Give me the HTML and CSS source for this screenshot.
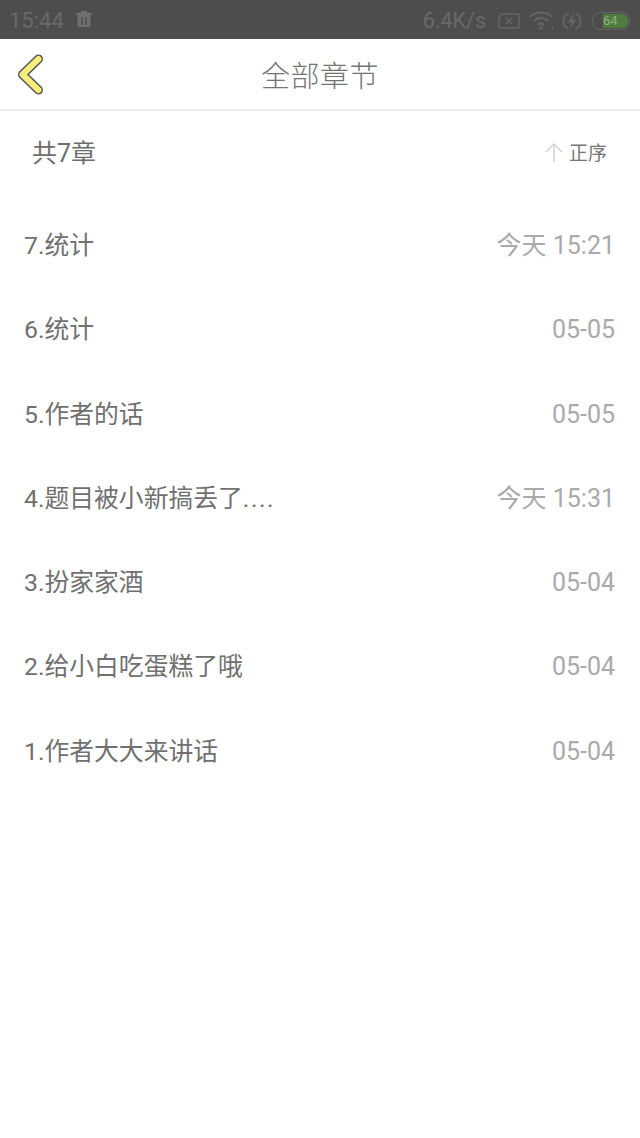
FILE: index.html
```html
<!DOCTYPE html>
<html lang="zh-CN">
<head>
    <meta charset="UTF-8">
    <title>全部章节</title>
    <link rel="stylesheet" href="styles.css">
</head>
<body>
    <div class="statusbar">
        <div class="status-left">
            <span class="clock">15:44</span>
            <svg class="trash" width="16" height="18" viewBox="0 0 16 18">
                <path d="M0 3h16v2H0zM5 1h6v2H5z" fill="#6f6f6f"/>
                <path d="M1.500 5h13v12h-13z" fill="#6f6f6f"/>
                <path d="M6 7v8M10 7v8" stroke="#4d4d4d" stroke-width="1.500"/>
            </svg>
        </div>
        <div class="status-right">
            <span class="speed">6.4K/s</span>
            <svg class="icon-sim" width="22" height="16" viewBox="0 0 22 16" fill="none" stroke="#656565" stroke-width="1.500">
                <path d="M4 1h17v14H1V4z"/>
                <path d="M8 5l6 6M14 5l-6 6"/>
            </svg>
            <svg class="icon-wifi" width="25" height="20" viewBox="0 0 25 20" fill="none" stroke="#656565" stroke-width="2.200">
                <path d="M1 6c6-6 16-6 22 0"/>
                <path d="M5 10c4-4 10-4 14 0"/>
                <path d="M9 14c2-2 4-2 6 0"/>
                <circle cx="12" cy="17" r="1.800" fill="#656565" stroke="none"/>
                <path d="M23.500 15v4" stroke-width="1"/>
            </svg>
            <svg class="icon-bolt" width="20" height="20" viewBox="0 0 20 20" fill="none">
                <path d="M6.500 2.200a8.500 8.500 0 0 0 0 15.600M13.500 2.200a8.500 8.500 0 0 1 0 15.600" stroke="#656565" stroke-width="1.800"/>
                <path d="M12.500 1L5.500 11.500h4L7.500 19l7-10.500h-4z" fill="#656565"/>
            </svg>
            <div class="battery"><div class="battery-fill">64</div></div>
        </div>
    </div>

    <div class="navbar">
        <svg class="back" width="30" height="42" viewBox="0 0 30 42">
            <path d="M23.500 6L7.500 21.500L23.500 37" fill="none" stroke="#555" stroke-width="9" stroke-linecap="round" stroke-linejoin="round"/>
            <path d="M23.500 6L7.500 21.500L23.500 37" fill="none" stroke="#f6ee7c" stroke-width="6" stroke-linecap="round" stroke-linejoin="round"/>
        </svg>
        <div class="title">全部章节</div>
    </div>

    <div class="summary">
        <span class="count">共7章</span>
        <div class="sort">
            <svg width="20" height="20" viewBox="0 0 20 20" fill="none" stroke="#d4d4d4" stroke-width="1.500">
                <path d="M10 20V2M2 10l8-8 8 8"/>
            </svg>
            <span>正序</span>
        </div>
    </div>

    <ul class="chapters">
        <li><span>7.统计</span><span class="date">今天 15:21</span></li>
        <li><span>6.统计</span><span class="date">05-05</span></li>
        <li><span>5.作者的话</span><span class="date">05-05</span></li>
        <li><span>4.题目被小新搞丢了<span class="dots">....</span></span><span class="date">今天 15:31</span></li>
        <li><span>3.扮家家酒</span><span class="date">05-04</span></li>
        <li><span>2.给小白吃蛋糕了哦</span><span class="date">05-04</span></li>
        <li><span>1.作者大大来讲话</span><span class="date">05-04</span></li>
    </ul>
</body>
</html>
```

FILE: styles.css
```css
html, body {
    margin: 0;
    padding: 0;
}

body {
    height: 1138px;
    overflow: hidden;
    background: #fff;
    font-family: Roboto, "Noto Sans CJK SC", sans-serif;
}

.statusbar {
    height: 39px;
    background: #4d4d4d;
    color: #696969;
    display: flex;
    justify-content: space-between;
    align-items: center;
    padding: 2px 10px 0 9px;
    box-sizing: border-box;
    font-size: 22px;
}

.status-left,
.status-right {
    display: flex;
    align-items: center;
}

.trash {
    margin-left: 12px;
    margin-bottom: 4px;
}

.speed {
    font-size: 21.5px;
}

.icon-sim {
    margin-left: 12px;
}

.icon-wifi {
    margin-left: 9px;
}

.icon-bolt {
    margin-left: 8px;
}

.battery {
    margin-left: 10px;
    width: 34px;
    height: 14px;
    border: 1.5px solid #656565;
    border-radius: 8px;
    display: flex;
    justify-content: flex-end;
    padding: 1px;
}

.battery-fill {
    width: 25px;
    background: #4f7d3f;
    border-radius: 0 6px 6px 0;
    color: #8fb184;
    font-size: 13px;
    line-height: 14px;
}

.navbar {
    height: 70px;
    border-bottom: 2px solid #ececec;
    display: flex;
    align-items: center;
    justify-content: center;
    position: relative;
}

.back {
    position: absolute;
    left: 15px;
    top: 14px;
}

.title {
    font-size: 29px;
    font-weight: 300;
    color: #757575;
    letter-spacing: 0.5px;
}

.summary {
    display: flex;
    justify-content: space-between;
    align-items: center;
    height: 80px;
    padding: 0 33px 0 32px;
    color: #6e6e6e;
    font-size: 25px;
}

.sort {
    display: flex;
    align-items: center;
    gap: 5px;
    font-size: 19px;
    color: #777;
}

.sort svg {
    margin-top: 2px;
}

.chapters {
    list-style: none;
    margin: 0;
    padding: 13px 25px 0 24px;
}

.chapters li {
    height: 84.3px;
    line-height: 84.3px;
    display: flex;
    justify-content: space-between;
    align-items: baseline;
    font-size: 24.8px;
    color: #707070;
}

.dots {
    letter-spacing: 1.5px;
}

.date {
    font-size: 25px;
    color: #aaa;
}
```
